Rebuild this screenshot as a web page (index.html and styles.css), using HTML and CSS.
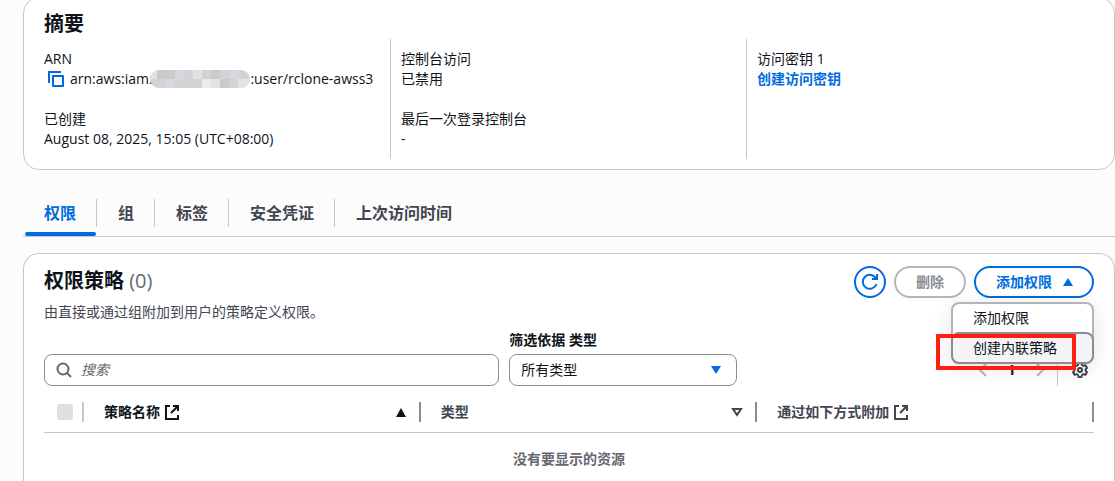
FILE: index.html
```html
<!DOCTYPE html>
<html lang="zh-CN">
<head>
    <meta charset="UTF-8">
    <meta name="viewport" content="width=device-width, initial-scale=1.0">
    <title>IAM 用户</title>
    <link rel="stylesheet" href="styles.css">
</head>
<body>
    <main>
        <section class="card summary">
            <h2>摘要</h2>
            <div class="columns">
                <dl>
                    <dt>ARN</dt>
                    <dd class="arn">
                        <button type="button" class="copy" aria-label="复制 ARN">
                            <svg width="16" height="16" viewBox="0 0 16 16" fill="none" stroke="currentColor" stroke-width="2"><path d="M1 12V1h12"/><path d="M5 5h10v10H5z" stroke-linejoin="round"/></svg>
                        </button>
                        <span>arn:aws:iam::</span><span class="masked"><svg width="100" height="18" viewBox="0 0 100 18" shape-rendering="crispEdges"><path fill="#d3d3d5" d="M0 0h100v18H0z"/><path fill="#e2e2e4" d="M0 0h7v9H0zM43 0h9v9h-9zM61 9h9v9h-9zM88 9h12v9H88z"/><path fill="#d6d8df" d="M25 0h9v9h-9zM79 0h9v9h-9zM16 9h9v9h-9z"/><path fill="#cacacc" d="M7 0h18v9H7zM61 0h9v9h-9zM70 9h9v9h-9z"/><path fill="#ebebeb" d="M52 9h9v9h-9z"/></svg></span><span>:user/rclone-awss3</span>
                    </dd>
                    <dt>已创建</dt>
                    <dd>August 08, 2025, 15:05 (UTC+08:00)</dd>
                </dl>
                <dl>
                    <dt>控制台访问</dt>
                    <dd>已禁用</dd>
                    <dt>最后一次登录控制台</dt>
                    <dd>-</dd>
                </dl>
                <dl>
                    <dt>访问密钥 1</dt>
                    <dd><a href="#">创建访问密钥</a></dd>
                </dl>
            </div>
        </section>

        <nav class="tabs">
            <a href="#" class="active">权限</a>
            <a href="#">组</a>
            <a href="#">标签</a>
            <a href="#">安全凭证</a>
            <a href="#">上次访问时间</a>
        </nav>

        <section class="card policies">
            <div class="header">
                <div>
                    <h2>权限策略 <span class="count">(0)</span></h2>
                    <p>由直接或通过组附加到用户的策略定义权限。</p>
                </div>
                <div class="actions">
                    <button type="button" class="btn icon-btn" aria-label="刷新">
                        <svg width="18" height="18" viewBox="0 0 18 18" fill="none" stroke="currentColor" stroke-width="2"><path d="M15.500 11A7 7 0 1 1 15 5.500"/><path d="M16 1v5h-5"/></svg>
                    </button>
                    <button type="button" class="btn" disabled>删除</button>
                    <div class="dropdown">
                        <button type="button" class="btn toggle" aria-expanded="true">添加权限
                            <svg width="16" height="16" viewBox="0 0 16 16" fill="currentColor"><path d="M8 4l5 8H3z"/></svg>
                        </button>
                        <div class="menu">
                            <button type="button">添加权限</button>
                            <button type="button" class="highlighted">创建内联策略</button>
                            <div class="marker"></div>
                        </div>
                    </div>
                </div>
            </div>

            <div class="toolbar">
                <div class="filters">
                    <div class="search">
                        <svg width="16" height="16" viewBox="0 0 16 16" fill="none" stroke="currentColor" stroke-width="2"><circle cx="7" cy="7" r="5.500"/><path d="M11 11l4 4"/></svg>
                        <input type="text" placeholder="搜索" aria-label="搜索">
                    </div>
                    <div class="type-filter">
                        <label for="policyType">筛选依据 类型</label>
                        <div class="select">
                            <select id="policyType">
                                <option>所有类型</option>
                            </select>
                            <svg width="16" height="16" viewBox="0 0 16 16" fill="currentColor"><path d="M8 12L3 4h10z"/></svg>
                        </div>
                    </div>
                </div>
                <div class="paging">
                    <button type="button" class="arrow" aria-label="上一页" disabled>
                        <svg width="16" height="16" viewBox="0 0 16 16" fill="none" stroke="currentColor" stroke-width="2"><path d="M11 2L5 8l6 6"/></svg>
                    </button>
                    <button type="button" class="page">1</button>
                    <button type="button" class="arrow" aria-label="下一页" disabled>
                        <svg width="16" height="16" viewBox="0 0 16 16" fill="none" stroke="currentColor" stroke-width="2"><path d="M5 2l6 6-6 6"/></svg>
                    </button>
                    <button type="button" class="settings" aria-label="首选项">
                        <svg width="16" height="16" viewBox="0 0 16 16" fill="none" stroke="currentColor" stroke-width="2" stroke-linejoin="round"><path d="M6.500 1h3l.5 2 1.500.9 2-.6 1.500 2.600L13.600 7.300v1.400L15 10.100l-1.500 2.600-2-.6L10 13l-.5 2h-3L6 13l-1.500-.9-2 .6L1 10.100l1.400-1.400V7.300L1 5.900l1.500-2.600 2 .6L6 3z"/><circle cx="8" cy="8" r="2"/></svg>
                    </button>
                </div>
            </div>

            <table>
                <thead>
                    <tr>
                        <th class="check"><input type="checkbox" aria-label="全选" disabled></th>
                        <th class="sorted">
                            <div class="cell">
                                <span>策略名称</span>
                                <svg width="16" height="16" viewBox="0 0 16 16" fill="none" stroke="currentColor" stroke-width="2"><path d="M6 2H2v13h12v-4"/><path d="M9 2h5v5M14 2L7 9"/></svg>
                                <svg class="sort" width="16" height="16" viewBox="0 0 16 16" fill="currentColor"><path d="M8 4l5 9H3z"/></svg>
                            </div>
                        </th>
                        <th>
                            <div class="cell">
                                <span>类型</span>
                                <svg class="sort" width="16" height="16" viewBox="0 0 16 16" fill="none" stroke="currentColor" stroke-width="2"><path d="M8 11L4 5h8z"/></svg>
                            </div>
                        </th>
                        <th>
                            <div class="cell">
                                <span>通过如下方式附加</span>
                                <svg width="16" height="16" viewBox="0 0 16 16" fill="none" stroke="currentColor" stroke-width="2"><path d="M6 2H2v13h12v-4"/><path d="M9 2h5v5M14 2L7 9"/></svg>
                            </div>
                        </th>
                    </tr>
                </thead>
                <tbody>
                    <tr>
                        <td colspan="4">没有要显示的资源</td>
                    </tr>
                </tbody>
            </table>
        </section>
    </main>
</body>
</html>
```

FILE: styles.css
```css
* {
    box-sizing: border-box;
}
body {
    margin: 0;
    background-color: #fcfcfd;
    color: #0f141a;
    font-family: "Open Sans", "Noto Sans CJK SC", sans-serif;
    font-size: 14px;
    line-height: 20px;
}
main {
    display: flex;
    flex-direction: column;
    min-height: calc(100vh + 3px);
    margin-top: -3px;
    padding-left: 23px;
}
h2, p, dl, dd {
    margin: 0;
}
h2 {
    font-size: 20px;
    line-height: 24px;
}
svg {
    display: block;
    flex: none;
}
button, input, select {
    font: inherit;
    color: inherit;
}
button {
    padding: 0;
    border: none;
    background: none;
    cursor: pointer;
}
a {
    color: #006ce0;
    font-weight: bold;
    text-decoration: none;
}
.card {
    background: white;
    border: 1px solid #c6c6cd;
    border-radius: 16px;
}

/* Summary */
.summary {
    padding: 14px 12px 10px 10px;
}
.summary h2 {
    padding-left: 10px;
    margin-bottom: 3px;
}
.columns {
    display: grid;
    grid-template-columns: repeat(3, 1fr);
}
.columns dl {
    padding: 10px;
}
.columns dl + dl {
    border-left: 1px solid #c6c6cd;
}
.columns dd + dt {
    margin-top: 20px;
}
.arn {
    display: flex;
    align-items: center;
}
.copy {
    color: #006ce0;
    padding: 0 6px 0 4px;
}
.masked {
    margin-left: -6px;
    border-radius: 9px;
    overflow: hidden;
}

/* Tabs */
.tabs {
    display: flex;
    height: 47px;
    margin-top: 20px;
    padding-top: 9px;
    border-bottom: 1px solid #c6c6cd;
}
.tabs a {
    position: relative;
    height: 28px;
    padding: 0 20px 0 21px;
    border-right: 1px solid #c6c6cd;
    color: #424650;
    font-size: 16px;
    line-height: 28px;
}
.tabs a:last-child {
    border-right: none;
}
.tabs .active {
    color: #006ce0;
}
.tabs .active::after {
    content: "";
    position: absolute;
    left: 2px;
    right: 0;
    bottom: -9px;
    height: 4px;
    border-radius: 2px;
    background: #006ce0;
}

/* Policies */
.policies {
    flex: 1;
    margin-top: 16px;
    padding: 12px 20px 0;
    border-bottom: none;
    border-radius: 16px 16px 0 0;
}
.header {
    display: flex;
    justify-content: space-between;
}
.header h2 {
    margin-top: 3px;
}
.count {
    color: #656871;
    font-weight: normal;
}
.header p {
    margin-top: 9px;
    color: #424650;
}
.actions {
    display: flex;
    gap: 8px;
}
.btn {
    display: flex;
    align-items: center;
    gap: 8px;
    height: 32px;
    padding: 0 20px;
    border: 2px solid #006ce0;
    border-radius: 16px;
    color: #006ce0;
    font-weight: bold;
}
.btn:disabled {
    border-color: #b4b4bb;
    color: #8c8c94;
}
.icon-btn {
    padding: 0 5px;
}
.toggle {
    padding-right: 16px;
}
.dropdown {
    position: relative;
}
.menu {
    position: absolute;
    top: 36px;
    right: 0;
    width: 143px;
    border: 2px solid #b4b4bb;
    border-radius: 8px;
    background: white;
    box-shadow: 0 4px 20px 1px rgba(0, 7, 22, 0.1);
    z-index: 1;
}
.menu button {
    display: block;
    width: 100%;
    height: 28px;
    padding-left: 20px;
    text-align: left;
}
.menu .highlighted {
    width: 143px;
    height: 32px;
    margin: 0 -2px -2px;
    border: 2px solid #8c8c94;
    border-radius: 8px;
    background: #f4f4f7;
}
.marker {
    position: absolute;
    top: 30px;
    left: -17px;
    width: 140px;
    height: 36px;
    border: 4px solid #ff1e0f;
    border-radius: 1px;
}

.toolbar {
    display: flex;
    justify-content: space-between;
    align-items: flex-end;
    margin-top: 8px;
}
.filters {
    display: grid;
    grid-template-columns: 2fr 1fr;
    gap: 10px;
    align-items: end;
    width: 66%;
}
.search {
    display: flex;
    align-items: center;
    gap: 9px;
    height: 32px;
    padding: 0 11px;
    border: 1px solid #8c8c94;
    border-radius: 8px;
    color: #656871;
}
.search input {
    flex: 1;
    min-width: 0;
    padding: 0;
    border: none;
    outline: none;
    background: none;
}
.search input::placeholder {
    color: #656871;
    font-style: italic;
}
.type-filter label {
    display: block;
    margin-bottom: 4px;
    font-weight: bold;
}
.select {
    position: relative;
    color: #006ce0;
}
.select select {
    display: block;
    width: 100%;
    height: 32px;
    padding: 0 11px;
    border: 1px solid #8c8c94;
    border-radius: 8px;
    appearance: none;
    background: white;
    color: #0f141a;
}
.select svg {
    position: absolute;
    top: 8px;
    right: 13px;
    pointer-events: none;
}
.paging {
    display: flex;
    align-items: center;
    height: 32px;
}
.arrow {
    color: #b4b4bb;
}
.page {
    width: 41px;
    font-weight: bold;
}
.settings {
    height: 32px;
    margin-left: 9px;
    padding: 0 6px 0 14px;
    border-left: 1px solid #c6c6cd;
    color: #424650;
}

table {
    width: 100%;
    margin-top: 16px;
    border-collapse: separate;
    border-spacing: 0;
    table-layout: fixed;
}
th {
    padding: 0 0 10px;
    border-bottom: 1px solid #c6c6cd;
    color: #424650;
    text-align: left;
}
.check {
    width: 40px;
    background: linear-gradient(#c6c6cd, #c6c6cd) right top / 2px 20px no-repeat;
}
.check input {
    display: block;
    appearance: none;
    width: 16px;
    height: 16px;
    margin: 0 0 0 13px;
    border-radius: 3px;
    background: #dedee3;
}
.cell {
    display: flex;
    align-items: center;
    gap: 4px;
    height: 20px;
    padding: 0 10px 0 20px;
    border-right: 2px solid #8c8c94;
}
.sorted {
    color: #0f141a;
}
.sort {
    margin-left: auto;
}
td {
    padding: 16px 0 0;
    color: #656871;
    font-weight: bold;
    text-align: center;
}
```
